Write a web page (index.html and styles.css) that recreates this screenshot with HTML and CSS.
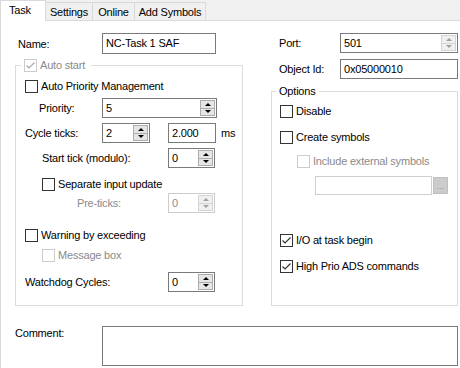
FILE: index.html
```html
<!DOCTYPE html>
<html>
<head>
<meta charset="utf-8">
<link rel="stylesheet" href="styles.css">
</head>
<body>
<div class="tabs">
  <div class="tab active tab-task">Task</div>
  <div class="tab tab-settings">Settings</div>
  <div class="tab tab-online">Online</div>
  <div class="tab tab-add">Add Symbols</div>
</div>
<div class="page">
  <div class="columns">
    <div class="col">
      <div class="row name-row">
        <span class="lbl lbl-name">Name:</span>
        <div class="textbox name-box">NC-Task 1 SAF</div>
      </div>
      <fieldset class="group auto-group">
        <legend class="legend legend-auto"><span class="legend-in"><span class="cb checked disabled"><svg viewBox="0 0 11 11" width="11" height="11"><path d="M1.5 5.5 L4 8 L9.5 2.5" fill="none" stroke="#a8a8a8" stroke-width="1.2"/></svg></span><span class="dis">Auto start</span></span></legend>
        <div class="row crow apm-row"><span class="cb"></span><span>Auto Priority Management</span></div>
        <div class="row srow prio-row">
          <span class="lbl lbl-prio">Priority:</span>
          <div class="spin spin-prio"><span class="val">5</span><span class="spin-btns"><span class="sb"><i class="up"></i></span><span class="sb"><i class="down"></i></span></span></div>
        </div>
        <div class="row srow cycle-row">
          <span class="lbl lbl-cycle">Cycle ticks:</span>
          <div class="spin spin-cycle"><span class="val">2</span><span class="spin-btns"><span class="sb"><i class="up"></i></span><span class="sb"><i class="down"></i></span></span></div>
          <div class="textbox ms-box">2.000</div>
          <span class="ms">ms</span>
        </div>
        <div class="row srow start-row">
          <span class="lbl lbl-start">Start tick (modulo):</span>
          <div class="spin spin-small"><span class="val">0</span><span class="spin-btns"><span class="sb"><i class="up"></i></span><span class="sb"><i class="down"></i></span></span></div>
        </div>
        <div class="row crow sep-row"><span class="cb"></span><span>Separate input update</span></div>
        <div class="row srow pre-row">
          <span class="lbl lbl-pre dis">Pre-ticks:</span>
          <div class="spin spin-small disabled"><span class="val">0</span><span class="spin-btns"><span class="sb"><i class="up"></i></span><span class="sb"><i class="down"></i></span></span></div>
        </div>
        <div class="row crow warn-row"><span class="cb"></span><span>Warning by exceeding</span></div>
        <div class="row crow msg-row"><span class="cb disabled"></span><span class="dis">Message box</span></div>
        <div class="row srow wd-row">
          <span class="lbl lbl-wd">Watchdog Cycles:</span>
          <div class="spin spin-small"><span class="val">0</span><span class="spin-btns"><span class="sb"><i class="up"></i></span><span class="sb"><i class="down"></i></span></span></div>
        </div>
      </fieldset>
    </div>
    <div class="col">
      <div class="row srow port-row">
        <span class="lbl lbl-right">Port:</span>
        <div class="spin spin-port light"><span class="val">501</span><span class="spin-btns"><span class="sb"><i class="up"></i></span><span class="sb"><i class="down"></i></span></span></div>
      </div>
      <div class="row srow oid-row">
        <span class="lbl lbl-right">Object Id:</span>
        <div class="textbox oid-box">0x05000010</div>
      </div>
      <fieldset class="group opt-group">
        <legend class="legend legend-opt">Options</legend>
        <div class="row crow dis-row"><span class="cb"></span><span>Disable</span></div>
        <div class="row crow cs-row"><span class="cb"></span><span>Create symbols</span></div>
        <div class="row crow inc-row"><span class="cb disabled"></span><span class="dis">Include external symbols</span></div>
        <div class="row path-row">
          <div class="textbox path-box disabled"></div>
          <div class="dots-btn">...</div>
        </div>
        <div class="row crow io-row"><span class="cb checked"><svg viewBox="0 0 11 11" width="11" height="11"><path d="M1.5 5.5 L4 8 L9.5 2.5" fill="none" stroke="#333" stroke-width="1.2"/></svg></span><span>I/O at task begin</span></div>
        <div class="row crow hp-row"><span class="cb checked"><svg viewBox="0 0 11 11" width="11" height="11"><path d="M1.5 5.5 L4 8 L9.5 2.5" fill="none" stroke="#333" stroke-width="1.2"/></svg></span><span>High Prio ADS commands</span></div>
      </fieldset>
    </div>
  </div>
  <div class="comment-row">
    <span class="lbl lbl-comment">Comment:</span>
    <div class="textbox comment-box"></div>
  </div>
</div>
</body>
</html>
```
FILE: styles.css
```css
* { box-sizing: border-box; }
html, body { margin: 0; padding: 0; }
body {
  width: 460px;
  height: 368px;
  overflow: hidden;
  background: #fff;
  font-family: "Liberation Sans", Arial, sans-serif;
  font-size: 11px;
  letter-spacing: -0.2px;
  color: #000;
}

/* tabs */
.tabs {
  display: flex;
  align-items: flex-end;
  height: 21px;
  background: #f0f0f0;
  border-bottom: 1px solid #d9d9d9;
}
.tab {
  height: 18px;
  line-height: 18px;
  background: #f0f0f0;
  border-top: 1px solid #d9d9d9;
  border-right: 1px solid #d9d9d9;
  text-align: center;
}
.tab.active {
  height: 21px;
  margin-bottom: -1px;
  line-height: 19px;
  background: #fff;
  border-left: 1px solid #d9d9d9;
  text-align: left;
  padding-left: 8px;
}
.tab-task { width: 46px; }
.tab-settings { width: 47px; }
.tab-online { width: 42px; }
.tab-add { width: 71px; }

/* page */
.page {
  height: 347px;
  border-left: 1px solid #d9d9d9;
  padding: 12px 2px 0 14px;
}
.columns {
  display: grid;
  grid-template-columns: 228px 187px;
  column-gap: 28px;
}
.col { display: flex; flex-direction: column; }

.row { display: flex; align-items: center; }
.crow { height: 16px; }
.srow { height: 20px; }

.lbl { flex: none; }
.dis { color: #8a8a8a; }

/* text boxes */
.textbox {
  height: 20px;
  border: 1px solid #7a7a7a;
  background: #fff;
  padding-left: 3px;
  line-height: 18px;
  white-space: nowrap;
}
.textbox.disabled { border-color: #cfcfcf; }

/* checkbox */
.cb {
  flex: none;
  width: 13px;
  height: 13px;
  border: 1px solid #333;
  background: #fff;
  margin-right: 3px;
  display: inline-flex;
  align-items: center;
  justify-content: center;
}
.cb.disabled { border-color: #cccccc; }
.cb svg { display: block; }

/* spin box */
.spin {
  flex: none;
  display: flex;
  height: 20px;
  border: 1px solid #7a7a7a;
  background: #fff;
}
.spin .val { flex: 1; padding-left: 3px; line-height: 18px; }
.spin-btns {
  width: 15px;
  margin: 1px 1px 1px 0;
  display: flex;
  flex-direction: column;
  border: 1px solid #adadad;
  background: #e5e5e5;
}
.sb {
  flex: 1;
  display: flex;
  align-items: center;
  justify-content: center;
}
.sb + .sb { border-top: 1px solid #adadad; }
.up, .down { display: block; width: 0; height: 0; border-left: 3px solid transparent; border-right: 3px solid transparent; }
.up { border-bottom: 3px solid #000; }
.down { border-top: 3px solid #000; }
.spin.disabled { border-color: #cccccc; }
.spin.disabled .val { color: #8a8a8a; }
.spin.disabled .spin-btns, .spin.light .spin-btns { background: #f0f0f0; border-color: #d4d4d4; }
.spin.disabled .sb + .sb, .spin.light .sb + .sb { border-top-color: #d4d4d4; }
.spin.disabled .up, .spin.light .up { border-bottom-color: #a0a0a0; }
.spin.disabled .down, .spin.light .down { border-top-color: #a0a0a0; }

/* group boxes */
.group {
  margin: 0;
  padding: 0;
  border: 1px solid #dcdcdc;
  min-inline-size: 0;
}
.legend {
  height: 14px;
  line-height: 14px;
}
.legend-in { display: inline-flex; align-items: center; height: 14px; }
.legend-auto { margin-left: 5px; padding: 0 6px 0 3px; }
.legend-opt { margin-left: 4px; padding: 0 3px; }

/* left column */
.name-row { height: 21px; }
.lbl-name { width: 87px; padding-left: 3px; }
.name-box { width: 114px; height: 21px; line-height: 19px; }

.auto-group { margin-top: 4px; padding-bottom: 13px; }
.apm-row { margin-top: 6px; padding-left: 9px; }
.prio-row { margin-top: 4px; }
.lbl-prio { width: 86px; padding-left: 23px; }
.spin-prio { width: 115px; }
.cycle-row { margin-top: 5px; }
.lbl-cycle { width: 86px; padding-left: 9px; }
.spin-cycle { width: 48px; }
.ms-box { width: 48px; margin-left: 18px; }
.ms { margin-left: 5px; }
.start-row { margin-top: 5px; }
.lbl-start { width: 152px; padding-left: 26px; }
.spin-small { width: 47px; }
.sep-row { margin-top: 8px; padding-left: 26px; }
.pre-row { margin-top: 1px; }
.lbl-pre { width: 152px; padding-left: 61px; }
.warn-row { margin-top: 14px; padding-left: 9px; }
.msg-row { margin-top: 4px; padding-left: 26px; }
.wd-row { margin-top: 9px; }
.lbl-wd { width: 152px; padding-left: 9px; }

/* right column */
.lbl-right { width: 69px; padding-left: 8px; }
.spin-port { width: 118px; }
.oid-row { margin-top: 6px; }
.oid-box { width: 118px; }
.opt-group { margin-top: 5px; padding-bottom: 31px; }
.dis-row { margin-top: 5px; padding-left: 8px; }
.cs-row { margin-top: 10px; padding-left: 8px; }
.inc-row { margin-top: 8px; padding-left: 25px; }
.path-row { margin-top: 7px; padding-left: 43px; height: 19px; }
.path-box { width: 117px; height: 19px; }
.dots-btn {
  width: 15px;
  height: 17px;
  margin-left: 1px;
  background: #cccccc;
  border: 1px solid #bfbfbf;
  color: #8a8a8a;
  font-size: 9px;
  letter-spacing: 0;
  line-height: 17px;
  text-align: center;
}
.io-row { margin-top: 37px; padding-left: 8px; }
.hp-row { margin-top: 10px; padding-left: 8px; }

/* comment */
.comment-row { display: flex; margin-top: 20px; }
.lbl-comment { width: 87px; line-height: 14px; }
.comment-box { width: 356px; height: 40px; }
```
